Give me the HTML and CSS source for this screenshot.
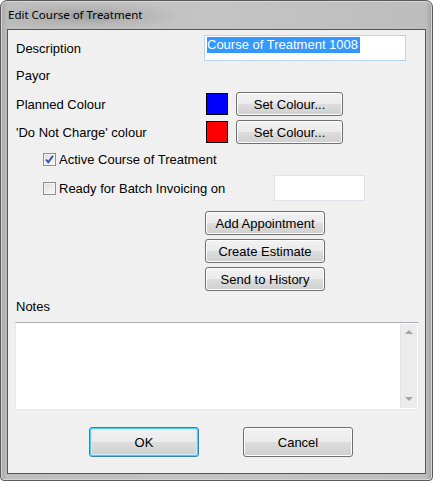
FILE: index.html
```html
<!DOCTYPE html>
<html lang="en">
<head>
  <meta charset="UTF-8">
  <title>Edit Course of Treatment</title>
  <link rel="stylesheet" href="styles.css">
</head>
<body>
  <div class="window">
    <div class="titlebar">Edit Course of Treatment</div>
    <div class="client">
      <div class="row row-desc">
        <span class="label">Description</span>
        <div class="textbox focused"><span class="sel">Course of Treatment 1008</span><span class="caret"></span></div>
      </div>
      <div class="row row-payor">
        <span class="label">Payor</span>
      </div>
      <div class="row row-colour first">
        <span class="label">Planned Colour</span>
        <span class="swatch blue"></span>
        <button class="btn btn-set">Set Colour...</button>
      </div>
      <div class="row row-colour">
        <span class="label">'Do Not Charge' colour</span>
        <span class="swatch red"></span>
        <button class="btn btn-set">Set Colour...</button>
      </div>
      <div class="row row-check row-active">
        <span class="check">
          <svg width="11" height="11" viewBox="0 0 11 11"><path d="M2 5.5 L4.3 8.3 L9 1.8" fill="none" stroke="#2c4aa3" stroke-width="1.8"/></svg>
        </span>
        <span class="check-label">Active Course of Treatment</span>
      </div>
      <div class="row row-check row-ready">
        <span class="check"></span>
        <span class="check-label wide">Ready for Batch Invoicing on</span>
        <div class="textbox date"></div>
      </div>
      <div class="actions">
        <button class="btn btn-action">Add Appointment</button>
        <button class="btn btn-action">Create Estimate</button>
        <button class="btn btn-action">Send to History</button>
      </div>
      <div class="notes-label">Notes</div>
      <div class="notes">
        <div class="scrollbar">
          <span class="arrow up"></span>
          <span class="arrow down"></span>
        </div>
      </div>
      <div class="footer">
        <button class="btn btn-dialog default">OK</button>
        <button class="btn btn-dialog">Cancel</button>
      </div>
    </div>
  </div>
</body>
</html>
```

FILE: styles.css
```css
body {
  margin: 0;
  background: #ffffff;
  font-family: "Liberation Sans", Arial, sans-serif;
  font-size: 13px;
  color: #000000;
}
.window {
  width: 433px;
  height: 481px;
  box-sizing: border-box;
  border: 1px solid #5a5a5a;
  border-radius: 7px 7px 4px 4px;
  padding: 0 6px 6px 6px;
  background: linear-gradient(to right, #a9a9a9 0, #bdbdbd 6px, #c4c4c4 50%, #bdbdbd calc(100% - 6px), #a0a0a0 100%);
  box-shadow: inset 0 0 0 1px #d6d6d6;
}
.titlebar {
  height: 28px;
  line-height: 28px;
  padding-left: 1px;
  font-family: "Noto Sans", "Segoe UI", sans-serif;
  font-size: 11.5px;
  color: #000000;
  background: radial-gradient(ellipse 100px 14px at 80px 15px, #9e9e9e 0, rgba(170, 170, 170, 0.4) 60%, rgba(190, 190, 190, 0) 100%);
}
.client {
  height: 445px;
  box-sizing: border-box;
  border: 1px solid #555555;
  background: #f0f0f0;
  padding-top: 5px;
}
.row {
  display: flex;
  align-items: center;
  padding-left: 8px;
}
.label {
  width: 188px;
  flex-shrink: 0;
}
.row-desc {
  height: 26px;
}
.row-payor {
  height: 28px;
}
.row-colour {
  height: 24px;
  margin-top: 4px;
}
.row-colour.first {
  margin-top: 3px;
}
.textbox {
  box-sizing: border-box;
  background: #ffffff;
  border: 1px solid #e3e9ef;
  border-top-color: #abadb3;
}
.textbox.focused {
  width: 202px;
  height: 26px;
  border: 1px solid #b6d5ee;
  display: flex;
  align-items: center;
  padding: 0 0 6px 2px;
}
.sel {
  background: #3399ff;
  color: #ffffff;
  line-height: 16px;
  padding-right: 1px;
}
.caret {
  width: 1px;
  height: 16px;
  background: #c86a3a;
}
.swatch {
  width: 22px;
  height: 22px;
  box-sizing: border-box;
  border: 1px solid #000000;
  margin-left: 2px;
}
.swatch.blue {
  background: #0000ff;
}
.swatch.red {
  background: #ff0000;
}
.btn {
  font-family: "Liberation Sans", Arial, sans-serif;
  font-size: 13px;
  color: #000000;
  box-sizing: border-box;
  border: 1px solid #707070;
  border-radius: 3px;
  background: linear-gradient(#f2f2f2 0, #ebebeb 48%, #dddddd 52%, #cfcfcf 100%);
  box-shadow: inset 0 0 0 1px #fcfcfc;
  padding: 0;
}
.btn-set {
  width: 107px;
  height: 24px;
  margin-left: 8px;
}
.row-check {
  padding-left: 35px;
}
.row-active {
  height: 18px;
  margin-top: 6px;
}
.row-ready {
  height: 26px;
  margin-top: 7px;
}
.check {
  width: 13px;
  height: 13px;
  box-sizing: border-box;
  border: 1px solid #8e8f8f;
  background: linear-gradient(135deg, #dcdcdc, #fbfbfb);
  box-shadow: inset 0 0 0 1px #f4f4f4;
  display: flex;
  align-items: center;
  justify-content: center;
}
.check-label {
  margin-left: 3px;
}
.check-label.wide {
  width: 215px;
}
.textbox.date {
  width: 91px;
  height: 26px;
  border-color: #e2e3ea;
}
.actions {
  display: flex;
  flex-direction: column;
  gap: 4px;
  margin-top: 10px;
  padding-left: 197px;
}
.btn-action {
  width: 120px;
  height: 24px;
}
.notes-label {
  height: 20px;
  line-height: 20px;
  margin-top: 6px;
  padding-left: 8px;
}
.notes {
  width: 404px;
  height: 88px;
  margin: 5px 0 0 7px;
  box-sizing: border-box;
  background: #ffffff;
  border: 1px solid #e3e9ef;
  border-top-color: #abadb3;
  display: flex;
  justify-content: flex-end;
  padding: 1px;
}
.scrollbar {
  width: 17px;
  box-sizing: border-box;
  background: #ececec;
  border-left: 1px solid #e3e3e3;
  display: flex;
  flex-direction: column;
  justify-content: space-between;
  align-items: center;
  padding: 6px 0 7px;
}
.arrow {
  width: 0;
  height: 0;
  border-left: 4px solid transparent;
  border-right: 4px solid transparent;
}
.arrow.up {
  border-bottom: 4px solid #a5a5a5;
}
.arrow.down {
  border-top: 4px solid #a5a5a5;
}
.footer {
  display: flex;
  gap: 44px;
  margin-top: 17px;
  padding-left: 81px;
}
.btn-dialog {
  width: 110px;
  height: 30px;
}
.btn-dialog.default {
  border-color: #3c7fb1;
  box-shadow: inset 0 0 0 1px #48d0f5, inset 0 0 0 2px #c4ecfb;
}
```
